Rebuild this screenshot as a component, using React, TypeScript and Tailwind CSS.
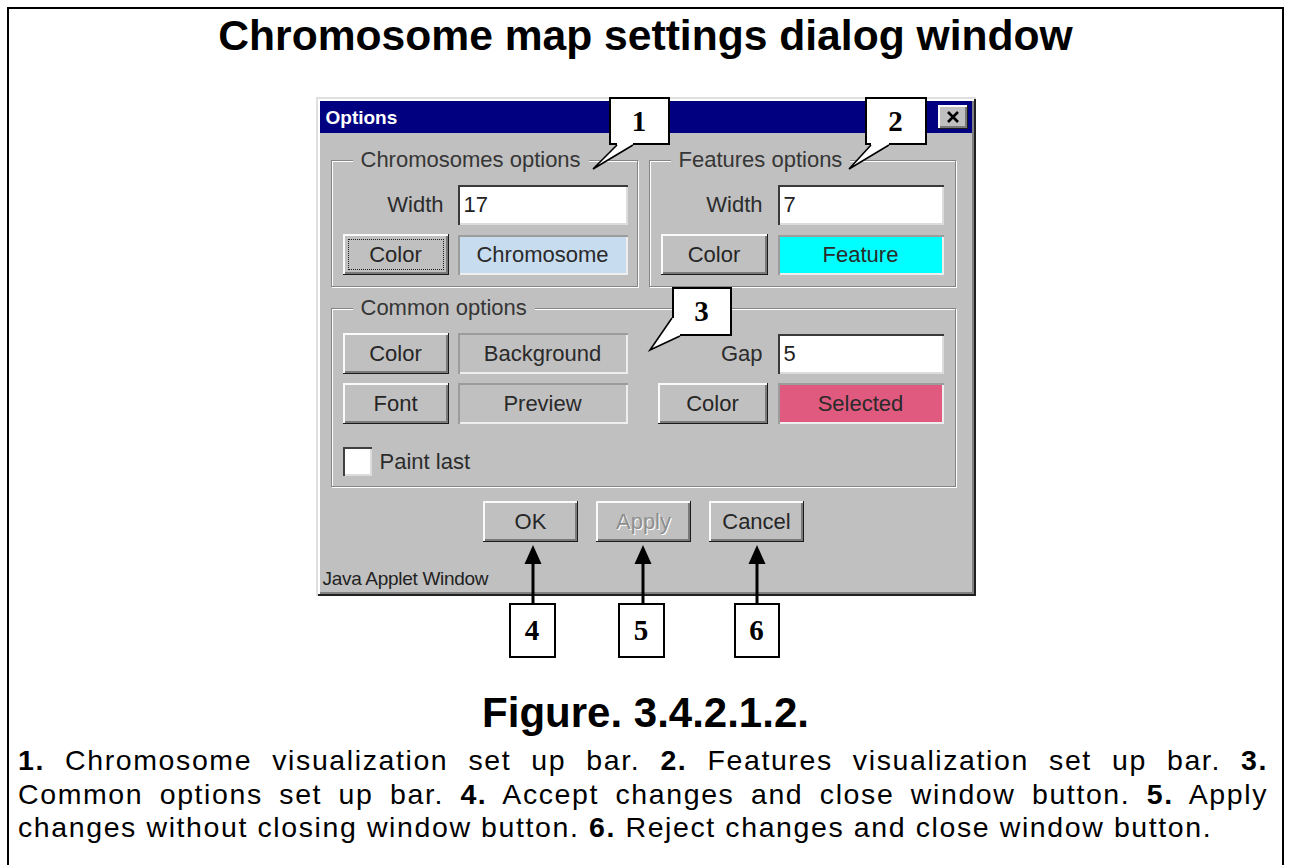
import type { ReactNode } from 'react'

const RAISED =
  'bg-[#c0c0c0] shadow-[inset_-1px_-1px_0_#1a1a1a,inset_2px_2px_0_#fafafa,inset_-3px_-3px_0_#7a7a7a]'
const SUNKEN = 'bg-white shadow-[inset_2px_2px_0_#3a3a3a,inset_-2px_-2px_0_#dcdcdc]'
const SWATCH = 'shadow-[inset_2px_2px_0_#9c9c9c,inset_-2px_-2px_0_#eeeeee]'
const NUMBOX =
  "absolute flex items-center justify-center border-2 border-black bg-white font-['Liberation_Serif','Times_New_Roman',serif] text-[29px] font-bold leading-none"

function Button({
  children,
  className = '',
  focus = false,
  disabled = false,
}: {
  children: ReactNode
  className?: string
  focus?: boolean
  disabled?: boolean
}) {
  return (
    <div className={`relative flex h-[41px] items-center justify-center ${RAISED} ${className}`}>
      {focus && <div className="absolute inset-[5px] border border-dotted border-[#1a1a1a]" />}
      <span
        className={
          disabled ? 'text-[#8e8e8e] [text-shadow:1px_1px_0_#fff]' : 'text-[#262626]'
        }
      >
        {children}
      </span>
    </div>
  )
}

function Field({ children, className = '' }: { children: ReactNode; className?: string }) {
  return (
    <div className={`flex h-[40px] items-center pl-[6px] text-[#222] ${SUNKEN} ${className}`}>
      {children}
    </div>
  )
}

function Swatch({ children, className = '' }: { children: ReactNode; className?: string }) {
  return (
    <div className={`flex items-center justify-center text-[#2a2a2a] ${SWATCH} ${className}`}>
      {children}
    </div>
  )
}

function Label({ children, className = '' }: { children: ReactNode; className?: string }) {
  return (
    <div className={`flex h-[40px] items-center justify-end pr-[5px] text-[#2c2c2c] ${className}`}>
      {children}
    </div>
  )
}

function Group({
  label,
  className = '',
  children,
}: {
  label: string
  className?: string
  children: ReactNode
}) {
  return (
    <div
      className={`relative border border-[#858585] shadow-[1px_1px_0_#fff,inset_1px_1px_0_#fff] ${className}`}
    >
      <span className="absolute left-[21px] top-[-13px] bg-[#c0c0c0] px-[8px] leading-[24px] text-[#363636]">
        {label}
      </span>
      {children}
    </div>
  )
}

function Dialog() {
  return (
    <div className="flex h-[499px] w-[660px] flex-col bg-[#c0c0c0] p-[4px] font-['Liberation_Sans',Arial,sans-serif] text-[22px] leading-none shadow-[inset_2px_2px_0_#e0e0e0,inset_-2px_-2px_0_#202020,inset_4px_4px_0_#fff,inset_-4px_-4px_0_#808080]">
      {/* title bar */}
      <div className="flex h-[32px] items-center justify-between bg-[#000080] pl-[6px] pr-[4px]">
        <span className="text-[19px] font-bold text-white">Options</span>
        <div className={`flex h-[24px] w-[30px] items-center justify-center ${RAISED}`}>
          <svg width="14" height="12" viewBox="0 0 14 12">
            <path d="M2 1 L12 11 M12 1 L2 11" stroke="#000" strokeWidth="2.6" />
          </svg>
        </div>
      </div>

      <div className="ml-[11px] mt-[27px] flex gap-[11px]">
        <Group label="Chromosomes options" className="h-[127px] w-[307px] pl-[11px] pt-[24px]">
          <div className="flex flex-col gap-[9px]">
            <div className="flex items-center gap-[9px]">
              <Label className="w-[106px]">Width</Label>
              <Field className="w-[170px]">17</Field>
            </div>
            <div className="flex items-center gap-[9px]">
              <Button className="w-[106px]" focus>
                Color
              </Button>
              <Swatch className="h-[40px] w-[170px] bg-[#c8dcf0]">Chromosome</Swatch>
            </div>
          </div>
        </Group>

        <Group label="Features options" className="h-[127px] w-[307px] pl-[11px] pt-[24px]">
          <div className="flex flex-col gap-[9px]">
            <div className="flex items-center gap-[10px]">
              <Label className="w-[107px]">Width</Label>
              <Field className="w-[166px]">7</Field>
            </div>
            <div className="flex items-center gap-[10px]">
              <Button className="w-[107px]">Color</Button>
              <Swatch className="h-[40px] w-[166px] bg-[#00ffff]">Feature</Swatch>
            </div>
          </div>
        </Group>
      </div>

      <Group label="Common options" className="ml-[11px] mt-[21px] h-[179px] w-[625px] pl-[11px] pt-[24px]">
        <div className="flex flex-col gap-[9px]">
          <div className="flex h-[41px] items-center">
            <Button className="w-[106px]">Color</Button>
            <Swatch className="ml-[9px] h-[41px] w-[170px]">Background</Swatch>
            <Label className="ml-[30px] w-[110px]">Gap</Label>
            <Field className="ml-[10px] h-[38px] w-[166px]">5</Field>
          </div>
          <div className="flex h-[41px] items-center">
            <Button className="w-[106px]">Font</Button>
            <Swatch className="ml-[9px] h-[41px] w-[170px]">Preview</Swatch>
            <Button className="ml-[30px] w-[110px]">Color</Button>
            <Swatch className="ml-[10px] h-[41px] w-[166px] bg-[#e05a80]">Selected</Swatch>
          </div>
        </div>
        <div className="mt-[23px] flex items-center">
          <div className="h-[29px] w-[29px] bg-white shadow-[inset_2px_2px_0_#404040,inset_-2px_-2px_0_#dcdcdc]" />
          <span className="ml-[8px] text-[#2c2c2c]">Paint last</span>
        </div>
      </Group>

      <div className="mt-[14px] flex justify-center gap-[18px] pr-[4px]">
        <Button className="w-[95px]">OK</Button>
        <Button className="w-[95px]" disabled>
          Apply
        </Button>
        <Button className="w-[95px]">Cancel</Button>
      </div>

      <div className="mt-[26px] pl-[3px] text-[19px] leading-[22px] tracking-[-0.3px] text-[#222]">
        Java Applet Window
      </div>
    </div>
  )
}

function Callouts() {
  const arrows = [217, 327, 441]
  return (
    <>
      <div className={`${NUMBOX} left-[293px] top-0 h-[48px] w-[61px]`}>1</div>
      <div className={`${NUMBOX} left-[549px] top-0 h-[48px] w-[62px]`}>2</div>
      <div className={`${NUMBOX} left-[356px] top-[190px] h-[49px] w-[60px]`}>3</div>
      <div className={`${NUMBOX} left-[193px] top-[506px] h-[55px] w-[47px]`}>4</div>
      <div className={`${NUMBOX} left-[302px] top-[506px] h-[55px] w-[47px]`}>5</div>
      <div className={`${NUMBOX} left-[418px] top-[506px] h-[55px] w-[46px]`}>6</div>
      <svg
        className="pointer-events-none absolute left-0 top-0 overflow-visible"
        width={660}
        height={561}
        viewBox="0 0 660 561"
      >
        {/* tail 1 */}
        <polygon points="301,45 317,45 317,48 277,72 301,48" fill="#fff" />
        <path d="M301 48 L277 72 L317 48" fill="none" stroke="#000" strokeWidth="1.6" />
        {/* tail 2 */}
        <polygon points="555,45 573,45 573,48 533,72 555,48" fill="#fff" />
        <path d="M555 48 L533 72 L573 48" fill="none" stroke="#000" strokeWidth="1.6" />
        {/* tail 3 */}
        <polygon points="356,221 359,221 359,236 364,236 364,239 334,253" fill="#fff" />
        <path d="M356 221 L334 253 L364 239" fill="none" stroke="#000" strokeWidth="1.6" />
        {arrows.map(x => (
          <g key={x}>
            <polygon points={`${x},448 ${x - 8.5},467 ${x + 8.5},467`} fill="#000" />
            <rect x={x - 1.5} y={465} width={3} height={42} fill="#000" />
          </g>
        ))}
      </svg>
    </>
  )
}

export default function App() {
  return (
    <div className="h-[865px] overflow-hidden bg-white pl-[7px] pt-[7px] font-['Liberation_Sans',Arial,sans-serif] text-black">
      <div className="h-[858px] w-[1277px] border-x-2 border-t-2 border-black pt-[2px]">
        <h1 className="text-center text-[42.6px] font-bold leading-[48px]">
          Chromosome map settings dialog window
        </h1>
        <figure className="relative mx-auto mt-[38px] w-[660px] pb-[62px]">
          <Dialog />
          <Callouts />
        </figure>
        <h2 className="mt-[31px] text-center text-[42px] font-bold leading-[48px]">Figure. 3.4.2.1.2.</h2>
        <div className="mt-[7px] pl-[9px] pr-[14px] text-[28.5px] leading-[33.5px] tracking-[1.6px]">
          <div className="text-justify [text-align-last:justify]">
            <b>1.</b>
            <span> Chromosome visualization set up bar. </span>
            <b>2.</b>
            <span> Features visualization set up bar. </span>
            <b>3.</b>
          </div>
          <div className="text-justify [text-align-last:justify]">
            <span>Common options set up bar. </span>
            <b>4.</b>
            <span> Accept changes and close window button. </span>
            <b>5.</b>
            <span> Apply</span>
          </div>
          <div>
            <span>changes without closing window button. </span>
            <b>6.</b>
            <span> Reject changes and close window button.</span>
          </div>
        </div>
      </div>
    </div>
  )
}
